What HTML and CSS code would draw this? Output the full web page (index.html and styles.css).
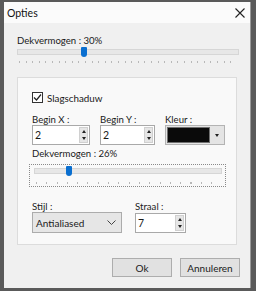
FILE: index.html
```html
<html>

<head>
    <link rel="stylesheet" href="styles.css">
</head>

<body>
    <div class="window">
        <div class="titlebar">
            <span class="title">Opties</span>
            <svg class="close" width="10" height="10" viewBox="0 0 10 10">
                <path d="M0.5 0.5 L9.5 9.5 M9.5 0.5 L0.5 9.5" stroke="#222" stroke-width="1.1" fill="none" />
            </svg>
        </div>
        <div class="content">
            <div class="lbl top">Dekvermogen : 30%</div>
            <div class="slider main">
                <div class="track"></div>
                <div class="thumb" style="left: 64px"></div>
                <div class="ticks"></div>
            </div>

            <div class="group">
                <div class="check-row">
                    <span class="checkbox">
                        <svg width="9" height="9" viewBox="0 0 9 9">
                            <path d="M1 4.5 L3.5 7 L8 1.5" stroke="#222" stroke-width="1.2" fill="none" />
                        </svg>
                    </span>
                    Slagschaduw
                </div>

                <div class="fields first">
                    <div class="field">
                        <div class="lbl">Begin X :</div>
                        <div class="spin wx">
                            <span class="val">2</span>
                            <span class="arrows"><i class="up"></i><i class="down"></i></span>
                        </div>
                    </div>
                    <div class="field">
                        <div class="lbl">Begin Y :</div>
                        <div class="spin wy">
                            <span class="val">2</span>
                            <span class="arrows"><i class="up"></i><i class="down"></i></span>
                        </div>
                    </div>
                    <div class="field">
                        <div class="lbl">Kleur :</div>
                        <div class="colorpick">
                            <span class="swatch"></span>
                            <span class="drop"><i class="down"></i></span>
                        </div>
                    </div>
                </div>

                <div class="lbl second">Dekvermogen : 26%</div>
                <div class="slider inner">
                    <div class="track"></div>
                    <div class="thumb" style="left: 36px"></div>
                    <div class="ticks"></div>
                </div>

                <div class="fields last">
                    <div class="field">
                        <div class="lbl">Stijl :</div>
                        <div class="combo">
                            <span>Antialiased</span>
                            <svg width="9" height="5" viewBox="0 0 9 5">
                                <path d="M0.5 0.5 L4.5 4.5 L8.5 0.5" stroke="#444" stroke-width="1" fill="none" />
                            </svg>
                        </div>
                    </div>
                    <div class="field">
                        <div class="lbl">Straal :</div>
                        <div class="spin ws">
                            <span class="val">7</span>
                            <span class="arrows"><i class="up"></i><i class="down"></i></span>
                        </div>
                    </div>
                </div>
            </div>

            <div class="buttons">
                <div class="btn">Ok</div>
                <div class="btn">Annuleren</div>
            </div>
        </div>
    </div>
</body>

</html>
```

FILE: styles.css
```css
* {
    box-sizing: border-box;
}

body {
    margin: 0;
    padding: 2px 0 0 4px;
    background-color: #5a5a5a;
    font-family: Lato, "Liberation Sans", Arial, sans-serif;
    font-size: 9.6px;
    color: #1a1a1a;
    width: 256px;
    height: 291px;
    overflow: hidden;
}

.window {
    width: 247px;
    height: 286px;
    background-color: #f0f0f0;
    border-right: 1px solid #9a9a9a;
}

.titlebar {
    height: 21px;
    background-color: #fbfbfb;
    display: flex;
    align-items: center;
    justify-content: space-between;
    padding: 0 5px 0 3px;
}

.title {
    font-size: 10.5px;
    color: #111;
}

.content {
    padding: 12px 13px 0 13px;
}

.lbl {
    line-height: 11px;
    height: 11px;
    white-space: nowrap;
}

.lbl.top {
    line-height: 12px;
    height: 13px;
}

/* sliders */
.slider {
    position: relative;
}

.slider .track {
    height: 6px;
    background-color: #e7e7e7;
    border: 1px solid #d6d6d6;
}

.slider .thumb {
    position: absolute;
    top: -2px;
    width: 6px;
    height: 10px;
    background-color: #0a6fd0;
    border-radius: 1px 1px 3px 3px;
}

.slider .ticks {
    height: 2px;
    background-image: repeating-linear-gradient(to right, #b8b8b8 0 1px, transparent 1px 6.6px);
}

.slider.main {
    height: 20px;
    padding-top: 1px;
    margin-bottom: 9px;
}

.slider.main .track {
    margin-right: -2px;
}

.slider.main .thumb {
    top: -1px;
}

.slider.main .ticks {
    margin: 6px 2px 0 2px;
}

.slider.inner {
    margin: 4px 10px 0 -3px;
    height: 23px;
    padding: 3px 3px 0 4px;
    border: 1px dotted #8a8a8a;
}

.slider.inner .thumb {
    top: 1px;
}

.slider.inner .ticks {
    margin: 8px 2px 0 2px;
    background-image: repeating-linear-gradient(to right, #b8b8b8 0 1px, transparent 1px 10.3px);
}

/* group */
.group {
    height: 168px;
    background-color: #f9f9f9;
    border: 1px solid #dcdcdc;
    padding: 14px 0 0 14px;
}

.check-row {
    display: flex;
    align-items: center;
    gap: 4px;
    height: 11px;
    font-size: 9.8px;
}

.checkbox {
    width: 11px;
    height: 11px;
    border: 1px solid #333;
    background-color: #fff;
    display: flex;
    align-items: center;
    justify-content: center;
}

.fields {
    display: flex;
}

.fields.first {
    margin-top: 11px;
    gap: 10px;
}

.fields.last {
    margin-top: 14px;
    gap: 13px;
}

.lbl.second {
    margin-top: 3px;
    line-height: 12px;
    height: 12px;
}

/* spin boxes */
.spin {
    height: 20px;
    background-color: #fff;
    border: 1px solid #a9a9a9;
    display: flex;
    align-items: center;
    justify-content: space-between;
    padding: 0 1px 0 2px;
    font-size: 10.5px;
}

.spin.wx {
    width: 58px;
}

.spin.wy {
    width: 55px;
}

.spin.ws {
    width: 51px;
    height: 20px;
    margin-top: 1px;
}

.arrows {
    width: 9px;
    height: 16px;
    background-color: #e6e6e6;
    border: 1px solid #d0d0d0;
    display: flex;
    flex-direction: column;
    align-items: center;
    justify-content: space-around;
}

i.up,
i.down {
    display: block;
    width: 0;
    height: 0;
    border-left: 2.5px solid transparent;
    border-right: 2.5px solid transparent;
}

i.up {
    border-bottom: 3px solid #222;
}

i.down {
    border-top: 3px solid #222;
}

/* colour picker */
.colorpick {
    width: 60px;
    height: 20px;
    background-color: #e4e4e4;
    border: 1px solid #b3b3b3;
    display: flex;
    align-items: center;
    padding: 1px;
}

.swatch {
    width: 43px;
    height: 16px;
    background-color: #0a0a0a;
    border: 1px solid #707070;
}

.drop {
    flex: 1;
    display: flex;
    justify-content: center;
}

/* combo */
.combo {
    width: 90px;
    height: 21px;
    background-color: #e6e6e6;
    border: 1px solid #acacac;
    display: flex;
    align-items: center;
    justify-content: space-between;
    padding: 0 5px 0 3px;
    font-size: 10px;
}

/* buttons */
.buttons {
    display: flex;
    justify-content: flex-end;
    gap: 8px;
    margin: 13px -3px 0 0;
}

.btn {
    width: 60px;
    height: 19px;
    background-color: #e1e1e1;
    border: 1px solid #adadad;
    display: flex;
    align-items: center;
    justify-content: center;
    font-size: 10px;
}
```
